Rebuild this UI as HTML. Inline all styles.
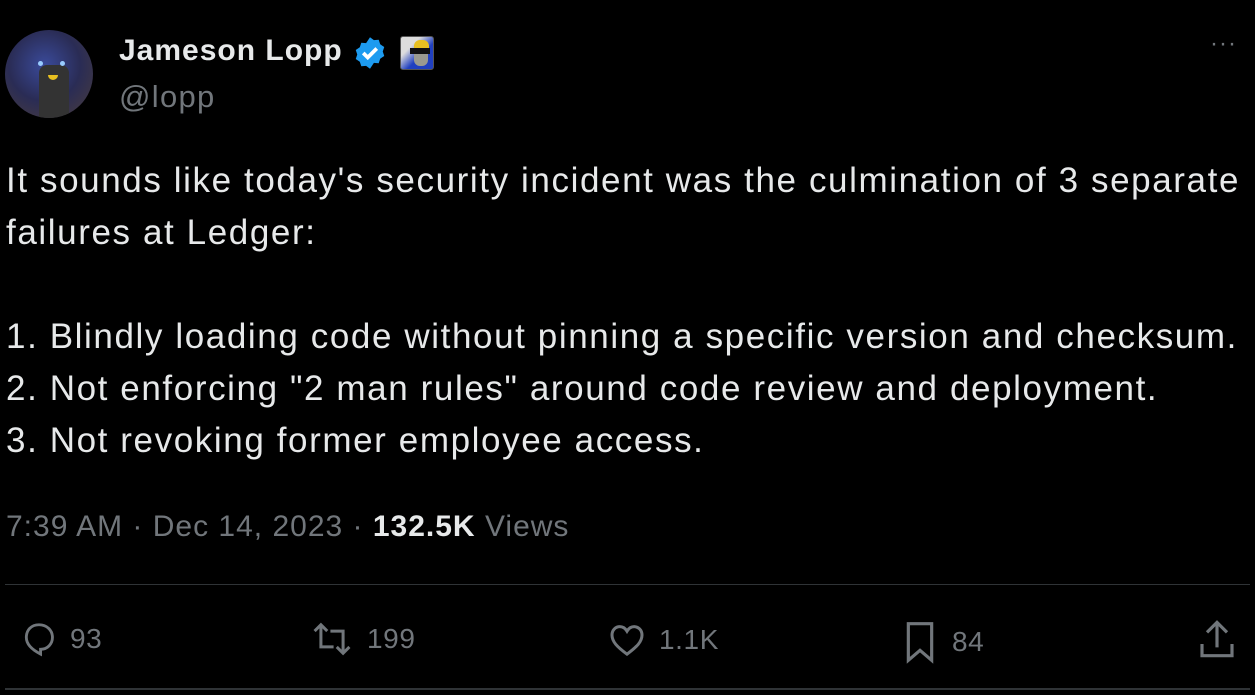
<!DOCTYPE html>
<html><head><style>
body{margin:0;background:#000;width:1255px;height:695px;overflow:hidden;font-family:"Liberation Sans",sans-serif;color:#e7e9ea;position:relative}
.a{position:absolute}
.g{color:#71767b}
.body{left:6px;top:155px;font-size:35px;line-height:52px;white-space:pre;letter-spacing:1.6px}
.act{top:620px;font-size:28px;color:#71767b;display:flex;align-items:center;gap:12px;letter-spacing:0.6px}
svg{fill:none;stroke:#71767b;stroke-width:3}
</style></head><body>
<div class="a" style="left:5px;top:30px;width:88px;height:88px;border-radius:50%;background:radial-gradient(circle at 45% 40%,#3a4a9a,#2a2c55 50%,#3b3548 75%,#222 100%);overflow:hidden">
<div class="a" style="left:34px;top:35px;width:30px;height:60px;background:#333;border-radius:8px"></div>
<div class="a" style="left:33px;top:31px;width:5px;height:5px;border-radius:50%;background:#9cf"></div>
<div class="a" style="left:55px;top:31px;width:5px;height:5px;border-radius:50%;background:#9cf"></div>
<div class="a" style="left:43px;top:45px;width:10px;height:5px;border-radius:0 0 6px 6px;background:#e8c020"></div>
</div>
<div class="a" style="left:119px;top:34px;font-size:30px;font-weight:bold;letter-spacing:1px">Jameson Lopp</div>
<svg class="a" style="left:352px;top:35px" width="36" height="36" viewBox="0 0 24 24"><path d="M12 1.5l2.6 1.9 3.2-.2 1 3 2.7 1.8-1 3 1 3-2.7 1.8-1 3-3.2-.2L12 22.5l-2.6-1.9-3.2.2-1-3-2.7-1.8 1-3-1-3 2.7-1.8 1-3 3.2.2z" fill="#1d9bf0" stroke="none"/><path d="M7.5 12l3 3 6-6" stroke="#fff" stroke-width="2.5"/></svg>
<div class="a" style="left:400px;top:36px;width:32px;height:32px;border-radius:3px;background:linear-gradient(135deg,#ddd 30%,#2040c0 60%);border:1px solid #555">
<div class="a" style="left:13px;top:3px;width:15px;height:8px;background:#e8c020;border-radius:6px 6px 0 0"></div>
<div class="a" style="left:9px;top:11px;width:20px;height:6px;background:#111"></div>
<div class="a" style="left:13px;top:17px;width:14px;height:12px;background:#9a9a90;border-radius:0 0 6px 6px"></div>
</div>
<div class="a g" style="left:119px;top:79px;font-size:31px;letter-spacing:1.3px">@lopp</div>
<div class="a g" style="left:1210px;top:30px;font-size:24px;letter-spacing:1px">···</div>
<div class="a body">It sounds like today's security incident was the culmination of 3 separate
failures at Ledger:

1. Blindly loading code without pinning a specific version and checksum.
2. Not enforcing "2 man rules" around code review and deployment.
3. Not revoking former employee access.</div>
<div class="a g" style="left:6px;top:510px;font-size:30px;letter-spacing:1px">7:39 AM · Dec 14, 2023 · <b style="color:#e7e9ea">132.5K</b> Views</div>
<div class="a" style="left:5px;top:584px;width:1245px;height:1px;background:#2f3336"></div>
<div class="a" style="left:5px;top:688px;width:1245px;height:2px;background:#2f3336"></div>
<div class="a act" style="left:20px"><svg width="38" height="38" viewBox="0 0 24 24"><path d="M12 3c5 0 8.5 3.5 8.5 8 0 4-3 7.5-7.5 7.5v3c-3-1.5-9-5-9-10.5C4 6.5 7 3 12 3z" stroke-width="1.8"/></svg>93</div>
<div class="a act" style="left:309px"><svg width="46" height="38" viewBox="0 0 28 24"><path d="M7 3v14h8M3 7l4-4 4 4M21 21V7h-8M17 17l4 4 4-4" stroke-width="1.9"/></svg>199</div>
<div class="a act" style="left:607px"><svg width="40" height="40" viewBox="0 0 24 24"><path d="M12 20.5C6 16 3 13 3 9c0-3 2.2-5 4.7-5 2 0 3.4 1.2 4.3 2.7.9-1.5 2.3-2.7 4.3-2.7C18.8 4 21 6 21 9c0 4-3 7-9 11.5z" stroke-width="1.8"/></svg>1.1K</div>
<div class="a act" style="left:900px"><svg width="40" height="44" viewBox="0 0 24 26"><path d="M5 2h14v22l-7-6-7 6z" stroke-width="1.9"/></svg>84</div>
<div class="a" style="left:1197px;top:617px"><svg width="40" height="44" viewBox="0 0 24 26"><path d="M12 18V3M6 9l6-6 6 6M3 16v7h18v-7" stroke-width="1.9"/></svg></div>
</body></html>
